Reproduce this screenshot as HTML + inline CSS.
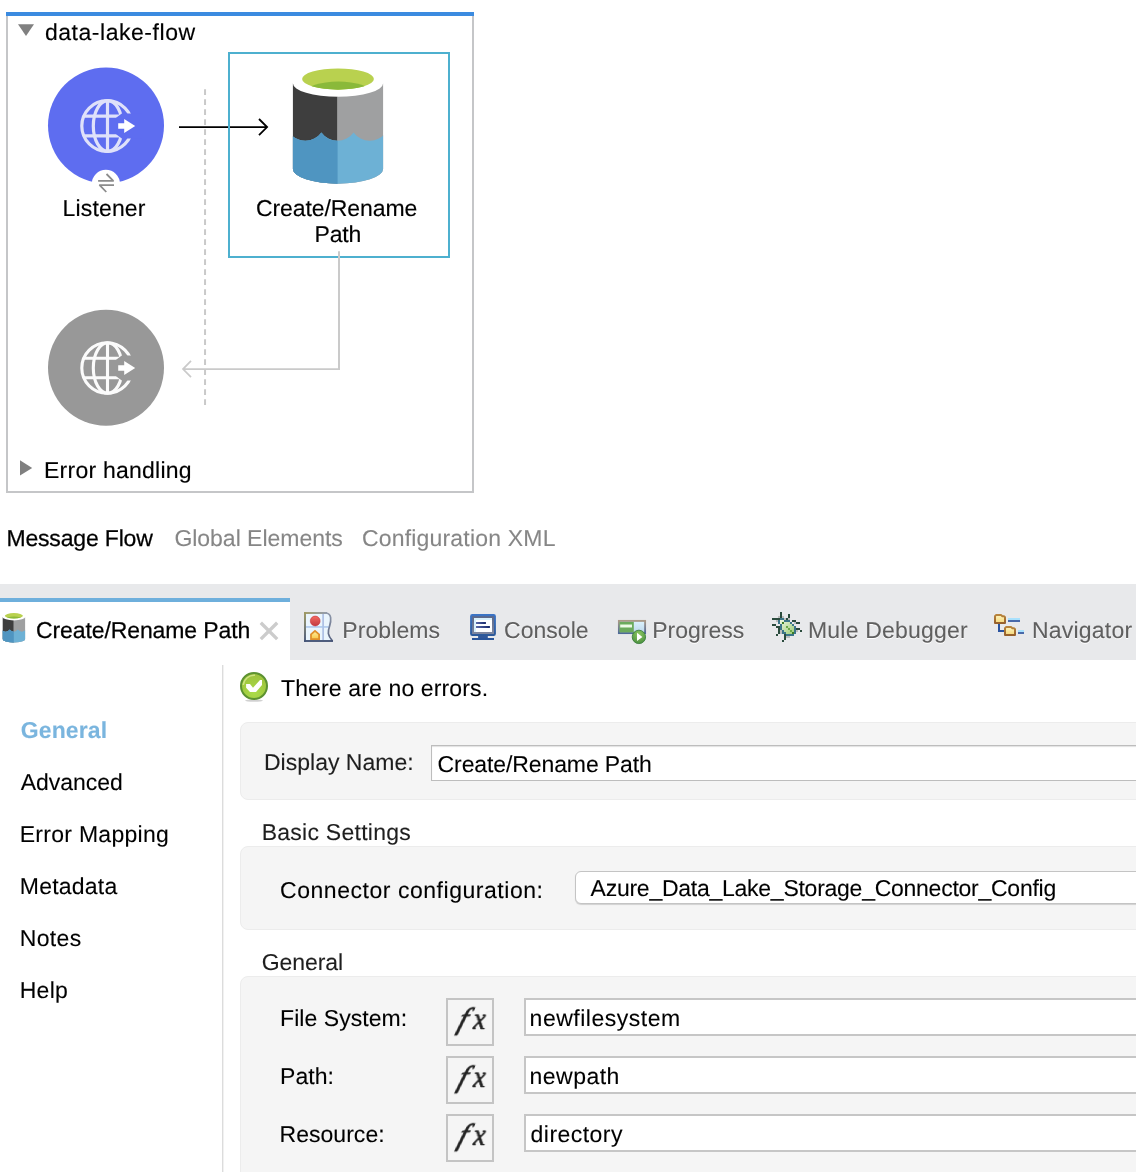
<!DOCTYPE html>
<html lang="en">
<head>
<meta charset="utf-8">
<title>Create/Rename Path</title>
<style>
html,body{margin:0;padding:0;background:#fff;}
body{width:1136px;height:1172px;position:relative;overflow:hidden;font-family:"Liberation Sans",sans-serif;font-size:22px;line-height:26px;color:#000;}
.a{position:absolute;}
.x{position:absolute;white-space:pre;font-size:23px;line-height:26px;color:#000;text-rendering:geometricPrecision;-webkit-text-stroke:0.1px currentColor;}
.x.c{-webkit-text-stroke:0.15px #000;}
.x.m{-webkit-text-stroke:0.25px #000;}
.x.g{color:#868686;}
.x.t{color:#5f5f5f;text-shadow:0 1px 0 #fff;}
.x.b{color:#7ab5de;font-weight:bold;}
.x.d{color:#1e1e1e;}
.panel{position:absolute;background:#f5f5f5;border:1px solid #ececec;border-radius:8px;box-sizing:border-box;}
.inp{position:absolute;background:#fff;border:2px solid #c6c6c6;box-sizing:border-box;}
.fx{position:absolute;width:48px;height:48px;box-sizing:border-box;border:2px solid #c4c4c4;background:#f5f5f5;}
.fx span{will-change:transform;position:absolute;font-family:"Liberation Serif",serif;font-style:italic;line-height:36px;color:#222;text-rendering:geometricPrecision;filter:blur(0.4px);}
.fx .f{left:7.5px;top:1.5px;font-size:30px;-webkit-text-stroke:0.8px #222;transform:skewX(-18deg);transform-origin:0 28px;}
.fx .k{left:24.5px;top:1px;font-size:31px;-webkit-text-stroke:0.7px #222;transform:skewX(-3deg) scaleX(0.88);transform-origin:0 28px;}
svg{position:absolute;left:0;top:0;overflow:visible;}
</style>
</head>
<body>
<!-- ===== flow canvas ===== -->
<div class="a" style="left:6px;top:14px;width:468px;height:479px;box-sizing:border-box;border:2px solid #c5c6c8;border-top:0;"></div>
<div class="a" style="left:6px;top:12px;width:468px;height:4px;background:#3b8be0;"></div>
<svg width="1136" height="600" viewBox="0 0 1136 600">
  <defs>
    <g id="globe">
      <!-- centred at 0,0 -->
      <g fill="none">
        <circle cx="0" cy="0" r="25.3"/>
        <ellipse cx="0.7" cy="0" rx="14.5" ry="25.3"/>
        <path d="M0.4 -25.3V25.3M-23.5 -9.8H23.5M-23.5 9.8H23.5"/>
      </g>
    </g>
    <g id="cyl">
      <clipPath id="bodyclip"><path d="M292.9 83.2A45.1 13.6 0 0 0 383.1 83.2V168.9A45.1 14.8 0 0 1 292.9 168.9Z"/></clipPath>
      <clipPath id="gclip"><ellipse cx="338" cy="79.03" rx="35.9" ry="10.64"/></clipPath>
      <g clip-path="url(#bodyclip)">
        <rect x="290" y="80" width="47.6" height="110" fill="#3e3e3e"/>
        <rect x="337.6" y="80" width="50" height="110" fill="#9fa0a1"/>
        <path id="wave" d="M289.2 132.5A19.8 19.8 0 0 0 321.4 132.5A19.8 19.8 0 0 0 353.6 132.5A19.8 19.8 0 0 0 385.8 132.5V190H289.2Z" fill="#6db1d5"/>
        <path d="M289.2 132.5A19.8 19.8 0 0 0 321.4 132.5A19.8 19.8 0 0 0 337.6 140.8V190H289.2Z" fill="#4f95c1"/>
      </g>
      <ellipse cx="338" cy="79.03" rx="35.9" ry="10.64" fill="#b9d14f"/>
      <ellipse cx="338.3" cy="92.6" rx="33" ry="11" fill="#8ab93a" clip-path="url(#gclip)"/>
    </g>
  </defs>
  <!-- dashed separator -->
  <path d="M205.05 89.2V405" stroke="#c9c9c9" stroke-width="2" stroke-dasharray="5.7 4.3" fill="none"/>
  <!-- listener circle -->
  <circle cx="106" cy="125.5" r="58" fill="#5e6df0"/>
  <g transform="translate(107.1 126)" stroke="#dfe1fa" stroke-width="3.2"><use href="#globe"/></g>
  <path d="M121.8 113.4L116.1 117.7V134.3L121.8 138.6H142V113.4Z" fill="#5e6df0"/>
  <path d="M118.2 123.2H124.2V118.9L135.2 126L124.2 133.1V128.8H118.2Z" fill="#fff"/>
  <circle cx="105.9" cy="183.9" r="14.1" fill="#fff"/>
  <path d="M98.1 180.9H113.8M113.5 181.2L106.5 174M114 185.1H99.1M99.4 184.8L106.3 192" fill="none" stroke="#8c8c8c" stroke-width="1.8"/>
  <!-- arrow -->
  <path d="M179 127.07H267M259 119L267.1 127.07L259 135.15" fill="none" stroke="#000" stroke-width="1.8"/>
  <!-- selected box -->
  <use href="#cyl"/>
  <rect x="229" y="53" width="220" height="204" fill="none" stroke="#4db0cf" stroke-width="2"/>
  <!-- return arrow -->
  <path d="M339 251.2V369.9" fill="none" stroke="#cacaca" stroke-width="2"/>
  <path d="M340 369.05H183.4M191 360.9L183 369.05L191 377.2" fill="none" stroke="#cacaca" stroke-width="1.7"/>
  <!-- grey circle -->
  <circle cx="106" cy="367.7" r="58" fill="#989898"/>
  <g transform="translate(107.1 368)" stroke="#fbfbfb" stroke-width="3.1"><use href="#globe"/></g>
  <path d="M121.8 355.4L116.1 359.7V376.3L121.8 380.6H142V355.4Z" fill="#989898"/>
  <path d="M118.2 365.2H124.2V360.9L135.2 368L124.2 375.1V370.8H118.2Z" fill="#fff"/>
  <!-- triangles -->
  <path d="M18 24.2H34L26 36Z" fill="#808080"/>
  <path d="M20 460.3V475.5L32.2 467.9Z" fill="#808080"/>
</svg>

<!-- ===== view tab bar ===== -->
<div class="a" style="left:0;top:584px;width:1136px;height:76px;background:#e8e9eb;"></div>
<div class="a" style="left:0;top:598px;width:290px;height:62px;background:#fff;border-top:4px solid #6eafdc;box-sizing:border-box;"></div>
<svg width="1136" height="1172" viewBox="0 0 1136 1172">
  <!-- small cylinder -->
  <g transform="translate(2.55 613.1) scale(0.2517 0.2567) translate(-292.9 -68.4)"><use href="#cyl"/></g>
  <!-- close x -->
  <path d="M260.8 622.7L277.2 639.1M277.2 622.7L260.8 639.1" stroke="#cccccc" stroke-width="3.4" fill="none"/>
  <defs>
<linearGradient id="pfL" x1="0" y1="0" x2="0" y2="1"><stop offset="0" stop-color="#a09a62"/><stop offset="1" stop-color="#465578"/></linearGradient>
<linearGradient id="pfT" x1="0" y1="0" x2="1" y2="0"><stop offset="0" stop-color="#a09a62"/><stop offset="1" stop-color="#8f98aa"/></linearGradient>
<linearGradient id="pfR" x1="0" y1="0" x2="0" y2="1"><stop offset="0" stop-color="#8f98aa"/><stop offset="1" stop-color="#55607e"/></linearGradient>
<linearGradient id="pRed" x1="0" y1="0" x2="0" y2="1"><stop offset="0" stop-color="#f46a62"/><stop offset="1" stop-color="#c23a40"/></linearGradient>
<linearGradient id="pYel" x1="0" y1="0" x2="0" y2="1"><stop offset="0" stop-color="#fff0a0"/><stop offset="1" stop-color="#f8c848"/></linearGradient>
<linearGradient id="cMon" x1="0" y1="0" x2="0" y2="1"><stop offset="0" stop-color="#3b74c6"/><stop offset="1" stop-color="#2c5898"/></linearGradient>
<linearGradient id="cFr" x1="0" y1="0" x2="0" y2="1"><stop offset="0" stop-color="#5c6888"/><stop offset="1" stop-color="#8088a0"/></linearGradient>
<linearGradient id="cLn" x1="0" y1="0" x2="1" y2="0"><stop offset="0" stop-color="#5a6aa8"/><stop offset="1" stop-color="#18286a"/></linearGradient>
<linearGradient id="gFr" x1="0" y1="0" x2="0" y2="1"><stop offset="0" stop-color="#ab9a88"/><stop offset="1" stop-color="#4f6a98"/></linearGradient>
<linearGradient id="gBl" x1="0" y1="0" x2="0" y2="1"><stop offset="0" stop-color="#dcf3fe"/><stop offset="1" stop-color="#bcd4e8"/></linearGradient>
<radialGradient id="gCi" cx="0.5" cy="0.3" r="0.7"><stop offset="0" stop-color="#8cc860"/><stop offset="1" stop-color="#4c9040"/></radialGradient>
<linearGradient id="bugG" x1="0" y1="0" x2="1" y2="1"><stop offset="0" stop-color="#eef8e0"/><stop offset="1" stop-color="#9ccc78"/></linearGradient>
<linearGradient id="fol" x1="0" y1="0" x2="0" y2="1"><stop offset="0" stop-color="#fdf4c0"/><stop offset="1" stop-color="#f6d878"/></linearGradient>
<linearGradient id="folS" x1="0" y1="0" x2="0" y2="1"><stop offset="0" stop-color="#b8843c"/><stop offset="1" stop-color="#96602c"/></linearGradient>
<radialGradient id="okG" cx="0.5" cy="0.75" r="0.75"><stop offset="0" stop-color="#aadc48"/><stop offset="1" stop-color="#9cc03c"/></radialGradient>
<filter id="soft" x="-10%" y="-10%" width="120%" height="120%"><feGaussianBlur stdDeviation="0.45"/></filter>
<filter id="soft2" x="-10%" y="-10%" width="120%" height="120%"><feGaussianBlur stdDeviation="0.6"/></filter>
</defs>
<g transform="translate(298 606)" filter="url(#soft)">
<path d="M7 7H28.5C33.5 8 33.5 14 31.5 20.5C29.5 26 29.5 29 34.5 35H7Z" fill="#eaf5fd"/>
<path d="M24.3 8V34H25.9V8Z" fill="#a9bce2"/>
<path d="M8 20.2H31.6V21.7H8Z" fill="#a9c4ea"/>
<path d="M28.5 7C33.5 8 33.5 14 31.5 20.5C29.5 26 29.5 29 34.5 35" fill="none" stroke="url(#pfR)" stroke-width="1.7"/>
<rect x="6" y="6.05" width="23" height="1.9" fill="url(#pfT)"/>
<rect x="6.05" y="6" width="1.9" height="30" fill="url(#pfL)"/>
<circle cx="17.2" cy="15" r="4.9" fill="url(#pRed)" stroke="#c83038" stroke-width="0.6"/>
<path d="M13 33.1V28.4L17 24.9L21.1 28.4V33.1Z" fill="url(#pYel)" stroke="#e0902c" stroke-width="1.8"/>
<path d="M6 35H35" stroke="#465578" stroke-width="1.9" fill="none"/>
</g>
<g transform="translate(463 606)" filter="url(#soft)">
<rect x="7.1" y="8.1" width="25.8" height="21.8" rx="2.2" fill="url(#cMon)"/>
<rect x="9.1" y="10.2" width="21.9" height="17.8" fill="url(#cFr)"/>
<rect x="11" y="12" width="18" height="14" fill="#fff"/>
<path d="M11 12H29V13.9H12.9V26H11Z" fill="#d8f1fd"/>
<rect x="13" y="16" width="9.9" height="2" fill="url(#cLn)"/>
<rect x="13" y="20" width="13.9" height="2" fill="url(#cLn)"/>
<rect x="15.1" y="29.9" width="9.7" height="2.2" fill="#31599a"/>
<rect x="9" y="32" width="22" height="2" fill="#29549a"/>
</g>
<g transform="translate(612 608)" filter="url(#soft)">
<rect x="6.9" y="12.9" width="26.2" height="12.2" fill="url(#gBl)" stroke="url(#gFr)" stroke-width="1.9"/>
<rect x="7.5" y="13.9" width="14.3" height="10.5" fill="#6caa5c"/>
<rect x="8.2" y="16.7" width="11.8" height="2.6" fill="#eefae6"/>
<rect x="8.2" y="16.1" width="11.8" height="0.7" fill="#b4dca6"/>
<rect x="8.2" y="19.2" width="11.8" height="0.7" fill="#b4dca6"/>
<circle cx="26.9" cy="28.9" r="6.7" fill="url(#gCi)" stroke="#3d8040" stroke-width="0.9"/>
<path d="M25 24.8V32.9L30.4 28.9Z" fill="#fff"/>
</g>
<g transform="translate(772 612)" filter="url(#soft2)" shape-rendering="crispEdges"><path d="M8 8H12V10H18V12H20V14H22V22H14V20H12V18H10V12H8Z" fill="url(#bugG)"/><rect x="8" y="0" width="2" height="6" fill="#2c4c3c"/><rect x="16" y="2" width="2" height="4" fill="#2c4c3c"/><rect x="0" y="6" width="8" height="2" fill="#2c4c3c"/><rect x="14" y="6" width="2" height="2" fill="#2c4c3c"/><rect x="20" y="8" width="4" height="2" fill="#2c4c3c"/><rect x="24" y="10" width="4" height="2" fill="#2c4c3c"/><rect x="0" y="12" width="4" height="2" fill="#2c4c3c"/><rect x="4" y="14" width="4" height="2" fill="#2c4c3c"/><rect x="6" y="16" width="2" height="6" fill="#2c4c3c"/><rect x="4" y="22" width="2" height="2" fill="#2c4c3c"/><rect x="24" y="16" width="4" height="2" fill="#2c4c3c"/><rect x="28" y="18" width="2" height="2" fill="#2c4c3c"/><rect x="12" y="22" width="2" height="6" fill="#2c4c3c"/><rect x="10" y="28" width="2" height="2" fill="#2c4c3c"/><rect x="8" y="6" width="4" height="2" fill="#3a7488"/><rect x="6" y="8" width="2" height="4" fill="#3a7488"/><rect x="12" y="8" width="6" height="2" fill="#3a7488"/><rect x="18" y="10" width="2" height="2" fill="#3a7488"/><rect x="20" y="12" width="2" height="2" fill="#3a7488"/><rect x="22" y="14" width="2" height="8" fill="#3a7488"/><rect x="8" y="12" width="2" height="6" fill="#3a7488"/><rect x="10" y="18" width="2" height="2" fill="#3a7488"/><rect x="10" y="20" width="4" height="2" fill="#3a7488"/><rect x="14" y="22" width="8" height="2" fill="#3a7488"/><rect x="10" y="10" width="2" height="2" fill="#3c7c28"/><rect x="14" y="14" width="2" height="2" fill="#6aa848"/><rect x="16" y="16" width="2" height="2" fill="#6aa848"/><rect x="18" y="18" width="2" height="2" fill="#6aa848"/><rect x="20" y="20" width="2" height="2" fill="#3c7c28"/><rect x="6" y="4" width="2" height="2" fill="#bdbdbd"/><rect x="10" y="4" width="2" height="2" fill="#bdbdbd"/><rect x="4" y="8" width="2" height="2" fill="#bdbdbd"/><rect x="12" y="6" width="2" height="2" fill="#bdbdbd"/><rect x="16" y="6" width="2" height="2" fill="#bdbdbd"/><rect x="22" y="10" width="2" height="2" fill="#bdbdbd"/><rect x="24" y="18" width="2" height="2" fill="#bdbdbd"/><rect x="8" y="18" width="2" height="4" fill="#bdbdbd"/><rect x="14" y="24" width="4" height="2" fill="#bdbdbd"/></g>
<g transform="translate(988 606)" filter="url(#soft)">
<path d="M11 18V25H16" fill="none" stroke="#2a52a0" stroke-width="2"/>
<path d="M7 17V10.2L8 9.1H13.2L14.4 10.3H16.2L17 11.2V17Z" fill="url(#fol)" stroke="url(#folS)" stroke-width="2" stroke-linejoin="round"/>
<path d="M17 29V22.2L18 21.1H23.2L24.4 22.3H26.2L27 23.2V29Z" fill="url(#fol)" stroke="url(#folS)" stroke-width="2" stroke-linejoin="round"/>
<rect x="20" y="12" width="12" height="2" fill="#a9e1fd"/><rect x="20" y="14" width="12" height="2" fill="#4a69a9"/>
<rect x="30" y="24" width="6" height="2" fill="#a9e1fd"/><rect x="30" y="26" width="6" height="2" fill="#4a69a9"/>
</g>
<g transform="translate(234 666)" filter="url(#soft2)">
<ellipse cx="20" cy="34.6" rx="9" ry="1.2" fill="#000" opacity="0.18"/>
<circle cx="20" cy="20" r="13" fill="url(#okG)" stroke="#5c9230" stroke-width="2"/>
<path d="M9.3 19A11 11 0 0 1 21 9.2" fill="none" stroke="#dff0a0" stroke-width="1.5" opacity="0.7"/>
<path d="M12.1 18.1H16L19 21.8L26 14.1H28V19L22 26H16L12.1 21.8Z" fill="#fff"/>
</g>
  <!-- sidebar divider -->
  <rect x="222" y="665" width="1.4" height="510" fill="#dcdcdc"/>
</svg>

<!-- ===== properties ===== -->
<div class="panel" style="left:240px;top:722px;width:920px;height:78px;"></div>
<div class="inp" style="left:431px;top:745px;width:720px;height:36px;border-width:1px;border-color:#bdbdbd;box-shadow:inset 0 1px 1px rgba(0,0,0,.12);"></div>
<div class="panel" style="left:240px;top:846px;width:920px;height:84px;"></div>
<div class="a" style="left:575px;top:871px;width:600px;height:33px;box-sizing:border-box;background:#fff;border:1px solid #c4c4c4;border-radius:6px;box-shadow:0 1px 1px rgba(0,0,0,.15);"></div>
<div class="panel" style="left:240px;top:976px;width:920px;height:220px;"></div>
<div class="fx" style="left:446px;top:998px;"><span class="f">f</span><span class="k">x</span></div>
<div class="fx" style="left:446px;top:1056px;"><span class="f">f</span><span class="k">x</span></div>
<div class="fx" style="left:446px;top:1114px;"><span class="f">f</span><span class="k">x</span></div>
<div class="inp" style="left:524px;top:998px;width:700px;height:38px;"></div>
<div class="inp" style="left:524px;top:1056px;width:700px;height:38px;"></div>
<div class="inp" style="left:524px;top:1114px;width:700px;height:38px;"></div>

<div class="a" style="left:0;top:0;width:1136px;height:1172px;will-change:transform;">
<span class="x c" style="left:44.90px;top:18.60px;letter-spacing:0.540px">data-lake-flow</span>
<span class="x c" style="left:62.50px;top:194.50px;letter-spacing:0.162px">Listener</span>
<span class="x c" style="left:256.00px;top:195.00px;letter-spacing:-0.089px">Create/Rename</span>
<span class="x c" style="left:314.50px;top:220.80px;letter-spacing:-0.179px">Path</span>
<span class="x c" style="left:44.00px;top:456.50px;letter-spacing:0.240px">Error handling</span>
<span class="x m" style="left:6.40px;top:524.80px;letter-spacing:-0.170px">Message Flow</span>
<span class="x g" style="left:174.40px;top:524.80px;letter-spacing:-0.025px">Global Elements</span>
<span class="x g" style="left:361.90px;top:524.80px;letter-spacing:0.193px">Configuration XML</span>
<span class="x m" style="left:36.00px;top:617.10px;letter-spacing:-0.105px">Create/Rename Path</span>
<span class="x t" style="left:342.20px;top:617.00px;letter-spacing:0.106px">Problems</span>
<span class="x t" style="left:504.00px;top:617.00px;letter-spacing:0.033px">Console</span>
<span class="x t" style="left:652.20px;top:617.00px;letter-spacing:-0.007px">Progress</span>
<span class="x t" style="left:808.00px;top:617.00px;letter-spacing:0.191px">Mule Debugger</span>
<span class="x t" style="left:1032.00px;top:617.00px;letter-spacing:0.203px">Navigator</span>
<span class="x" style="left:281.00px;top:674.60px;letter-spacing:0.135px">There are no errors.</span>
<span class="x b" style="left:20.75px;top:716.50px;letter-spacing:0.122px">General</span>
<span class="x" style="left:20.75px;top:769.00px;letter-spacing:-0.039px">Advanced</span>
<span class="x" style="left:19.75px;top:821.00px;letter-spacing:0.276px">Error Mapping</span>
<span class="x" style="left:19.75px;top:872.75px;letter-spacing:0.234px">Metadata</span>
<span class="x" style="left:19.75px;top:924.50px;letter-spacing:0.352px">Notes</span>
<span class="x" style="left:19.75px;top:976.50px;letter-spacing:0.243px">Help</span>
<span class="x d" style="left:264.00px;top:748.60px;letter-spacing:0.004px">Display Name:</span>
<span class="x" style="left:437.60px;top:751.00px;letter-spacing:-0.105px">Create/Rename Path</span>
<span class="x d" style="left:261.70px;top:819.00px;letter-spacing:0.258px">Basic Settings</span>
<span class="x" style="left:280.00px;top:876.90px;letter-spacing:0.538px">Connector configuration:</span>
<span class="x" style="left:590.60px;top:875.00px;letter-spacing:-0.258px">Azure_Data_Lake_Storage_Connector_Config</span>
<span class="x d" style="left:261.70px;top:948.70px;letter-spacing:-0.070px">General</span>
<span class="x" style="left:280.10px;top:1005.20px;letter-spacing:0.051px">File System:</span>
<span class="x" style="left:280.10px;top:1062.80px;letter-spacing:0.043px">Path:</span>
<span class="x" style="left:279.60px;top:1121.00px;letter-spacing:0.020px">Resource:</span>
<span class="x" style="left:529.60px;top:1005.20px;letter-spacing:0.510px">newfilesystem</span>
<span class="x" style="left:529.60px;top:1063.00px;letter-spacing:0.470px">newpath</span>
<span class="x" style="left:530.60px;top:1121.00px;letter-spacing:0.462px">directory</span>
</div>
</body>
</html>
